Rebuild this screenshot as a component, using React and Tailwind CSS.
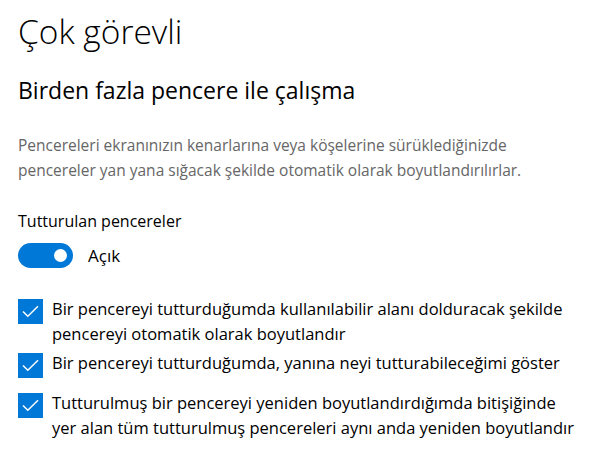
import React from "react";

const FONT = { fontFamily: '"Open Sans", "Noto Sans", sans-serif' };

const Check = () => (
  <span className="flex h-[25px] w-[25px] shrink-0 items-center justify-center bg-[#0078d7]">
    <svg width="17" height="13" viewBox="0 0 17 13" fill="none">
      <path d="M1 6.5 L5.8 11.3 L16 1.2" stroke="#fff" strokeWidth="1.5" />
    </svg>
  </span>
);

const CheckRow = ({ lines, className = "" }) => (
  <label className={`flex items-start gap-[9px] ${className}`}>
    <span className="pt-[3px]">
      <Check />
    </span>
    <span className="whitespace-nowrap text-[16.5px] leading-[25px] text-black">
      {lines.map((l, i) => (
        <span key={i} className="block">{l}</span>
      ))}
    </span>
  </label>
);

export default function App() {
  return (
    <div className="h-[472px] w-[602px] overflow-hidden bg-white pl-[18px] pt-[8px] antialiased" style={FONT}>
      <h1 className="text-[33.5px] font-light leading-[46px] text-black">Çok görevli</h1>

      <h2 className="mt-[20px] text-[23px] leading-[32px] text-black">
        Birden fazla pencere ile çalışma
      </h2>

      <p className="mt-[27px] whitespace-nowrap text-[15.5px] leading-[25px] text-[#666666]">
        Pencereleri ekranınızın kenarlarına veya köşelerine sürüklediğinizde
        <br />
        pencereler yan yana sığacak şekilde otomatik olarak boyutlandırılırlar.
      </p>

      <div className="mt-[26px] text-[16px] leading-[24px] text-black">Tutturulan pencereler</div>

      <div className="mt-[10px] flex items-center gap-[15px]">
        <span className="flex h-[25px] w-[55px] items-center justify-end rounded-full bg-[#0078d7] pr-[6px]">
          <span className="h-[13px] w-[13px] rounded-full bg-white" />
        </span>
        <span className="text-[17px] leading-[25px] text-black">Açık</span>
      </div>

      <div className="mt-[28px] flex flex-col">
        <CheckRow
          lines={[
            "Bir pencereyi tutturduğumda kullanılabilir alanı dolduracak şekilde",
            "pencereyi otomatik olarak boyutlandır",
          ]}
        />
        <CheckRow
          className="mt-[4px]"
          lines={["Bir pencereyi tutturduğumda, yanına neyi tutturabileceğimi göster"]}
        />
        <CheckRow
          className="mt-[12px]"
          lines={[
            "Tutturulmuş bir pencereyi yeniden boyutlandırdığımda bitişiğinde",
            "yer alan tüm tutturulmuş pencereleri aynı anda yeniden boyutlandır",
          ]}
        />
      </div>
    </div>
  );
}
